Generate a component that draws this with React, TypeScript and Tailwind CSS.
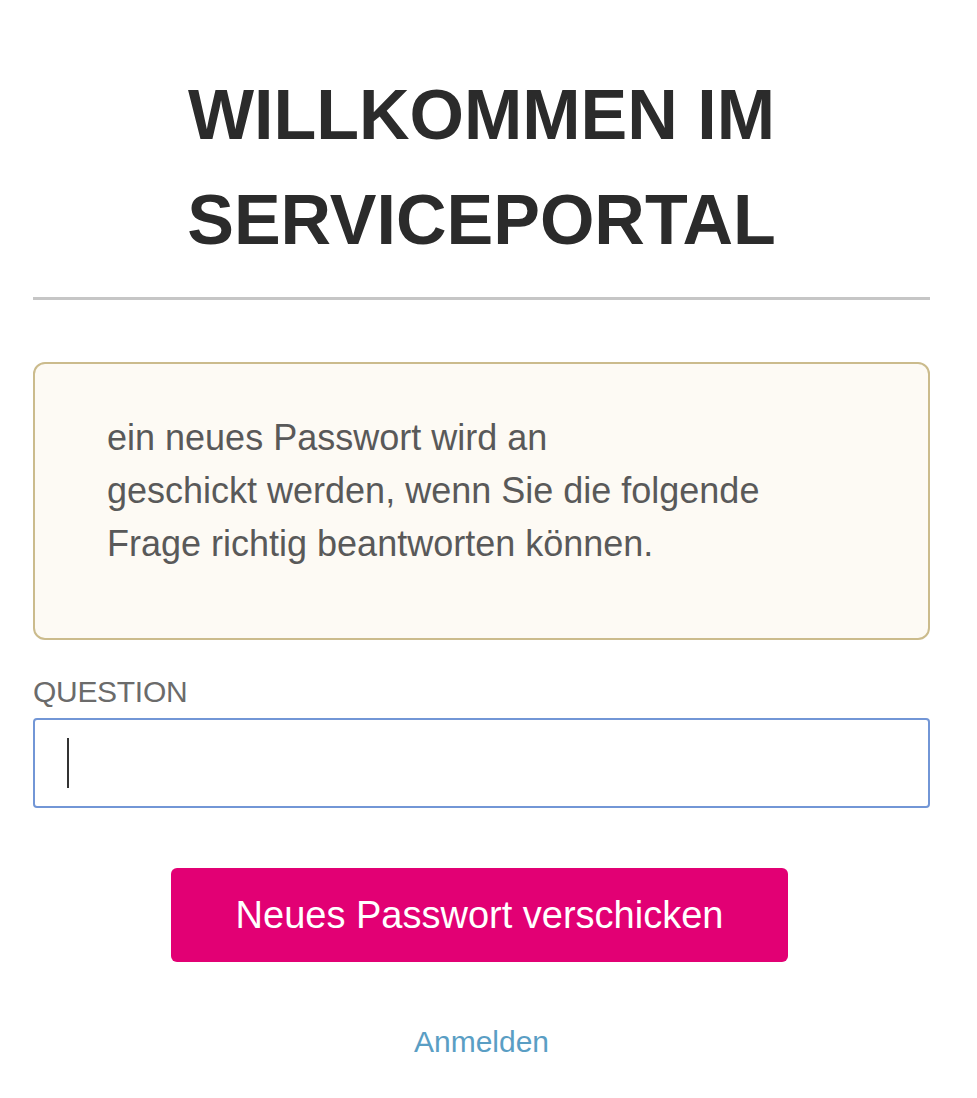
import React from "react";

export default function App() {
  return (
    <div className="min-h-screen bg-white font-['Liberation_Sans',Arial,sans-serif]">
      <div className="ml-[33px] w-[897px] pt-[63px]">
        {/* Titel */}
        <h1 className="text-center text-[70px] leading-[105px] font-bold text-[#2b2b2b] tracking-[0px]">
          WILLKOMMEN IM
          <br />
          SERVICEPORTAL
        </h1>

        <div className="mt-[24px] h-[3px] bg-[#c6c6c6]" />

        {/* Hinweisbox */}
        <div className="mt-[62px] h-[278px] rounded-[12px] border-2 border-[#cbbb8c] bg-[#fdfaf4] pl-[72px] pt-[47px]">
          <p className="text-[36px] leading-[53px] text-[#595959]">
            ein neues Passwort wird an
            <br />
            geschickt werden, wenn Sie die folgende
            <br />
            Frage richtig beantworten können.
          </p>
        </div>

        {/* Frage */}
        <label className="mt-[37px] block text-[30px] leading-[30px] text-[#6b6b6b] tracking-[-0.3px]">
          QUESTION
        </label>
        <div className="mt-[11px] flex h-[90px] items-center rounded-[4px] border-2 border-[#7296d6] bg-white pl-[32px]">
          <span className="h-[50px] w-[2px] bg-[#333333]" />
        </div>

        <button className="ml-[138px] mt-[60px] flex h-[94px] w-[617px] items-center justify-center rounded-[6px] bg-[#e20074] text-[38px] text-white">
          Neues Passwort verschicken
        </button>

        <div className="mt-[65px] text-center text-[30px] leading-[30px] text-[#5a9ec4]">
          <a href="#">Anmelden</a>
        </div>
      </div>
    </div>
  );
}
